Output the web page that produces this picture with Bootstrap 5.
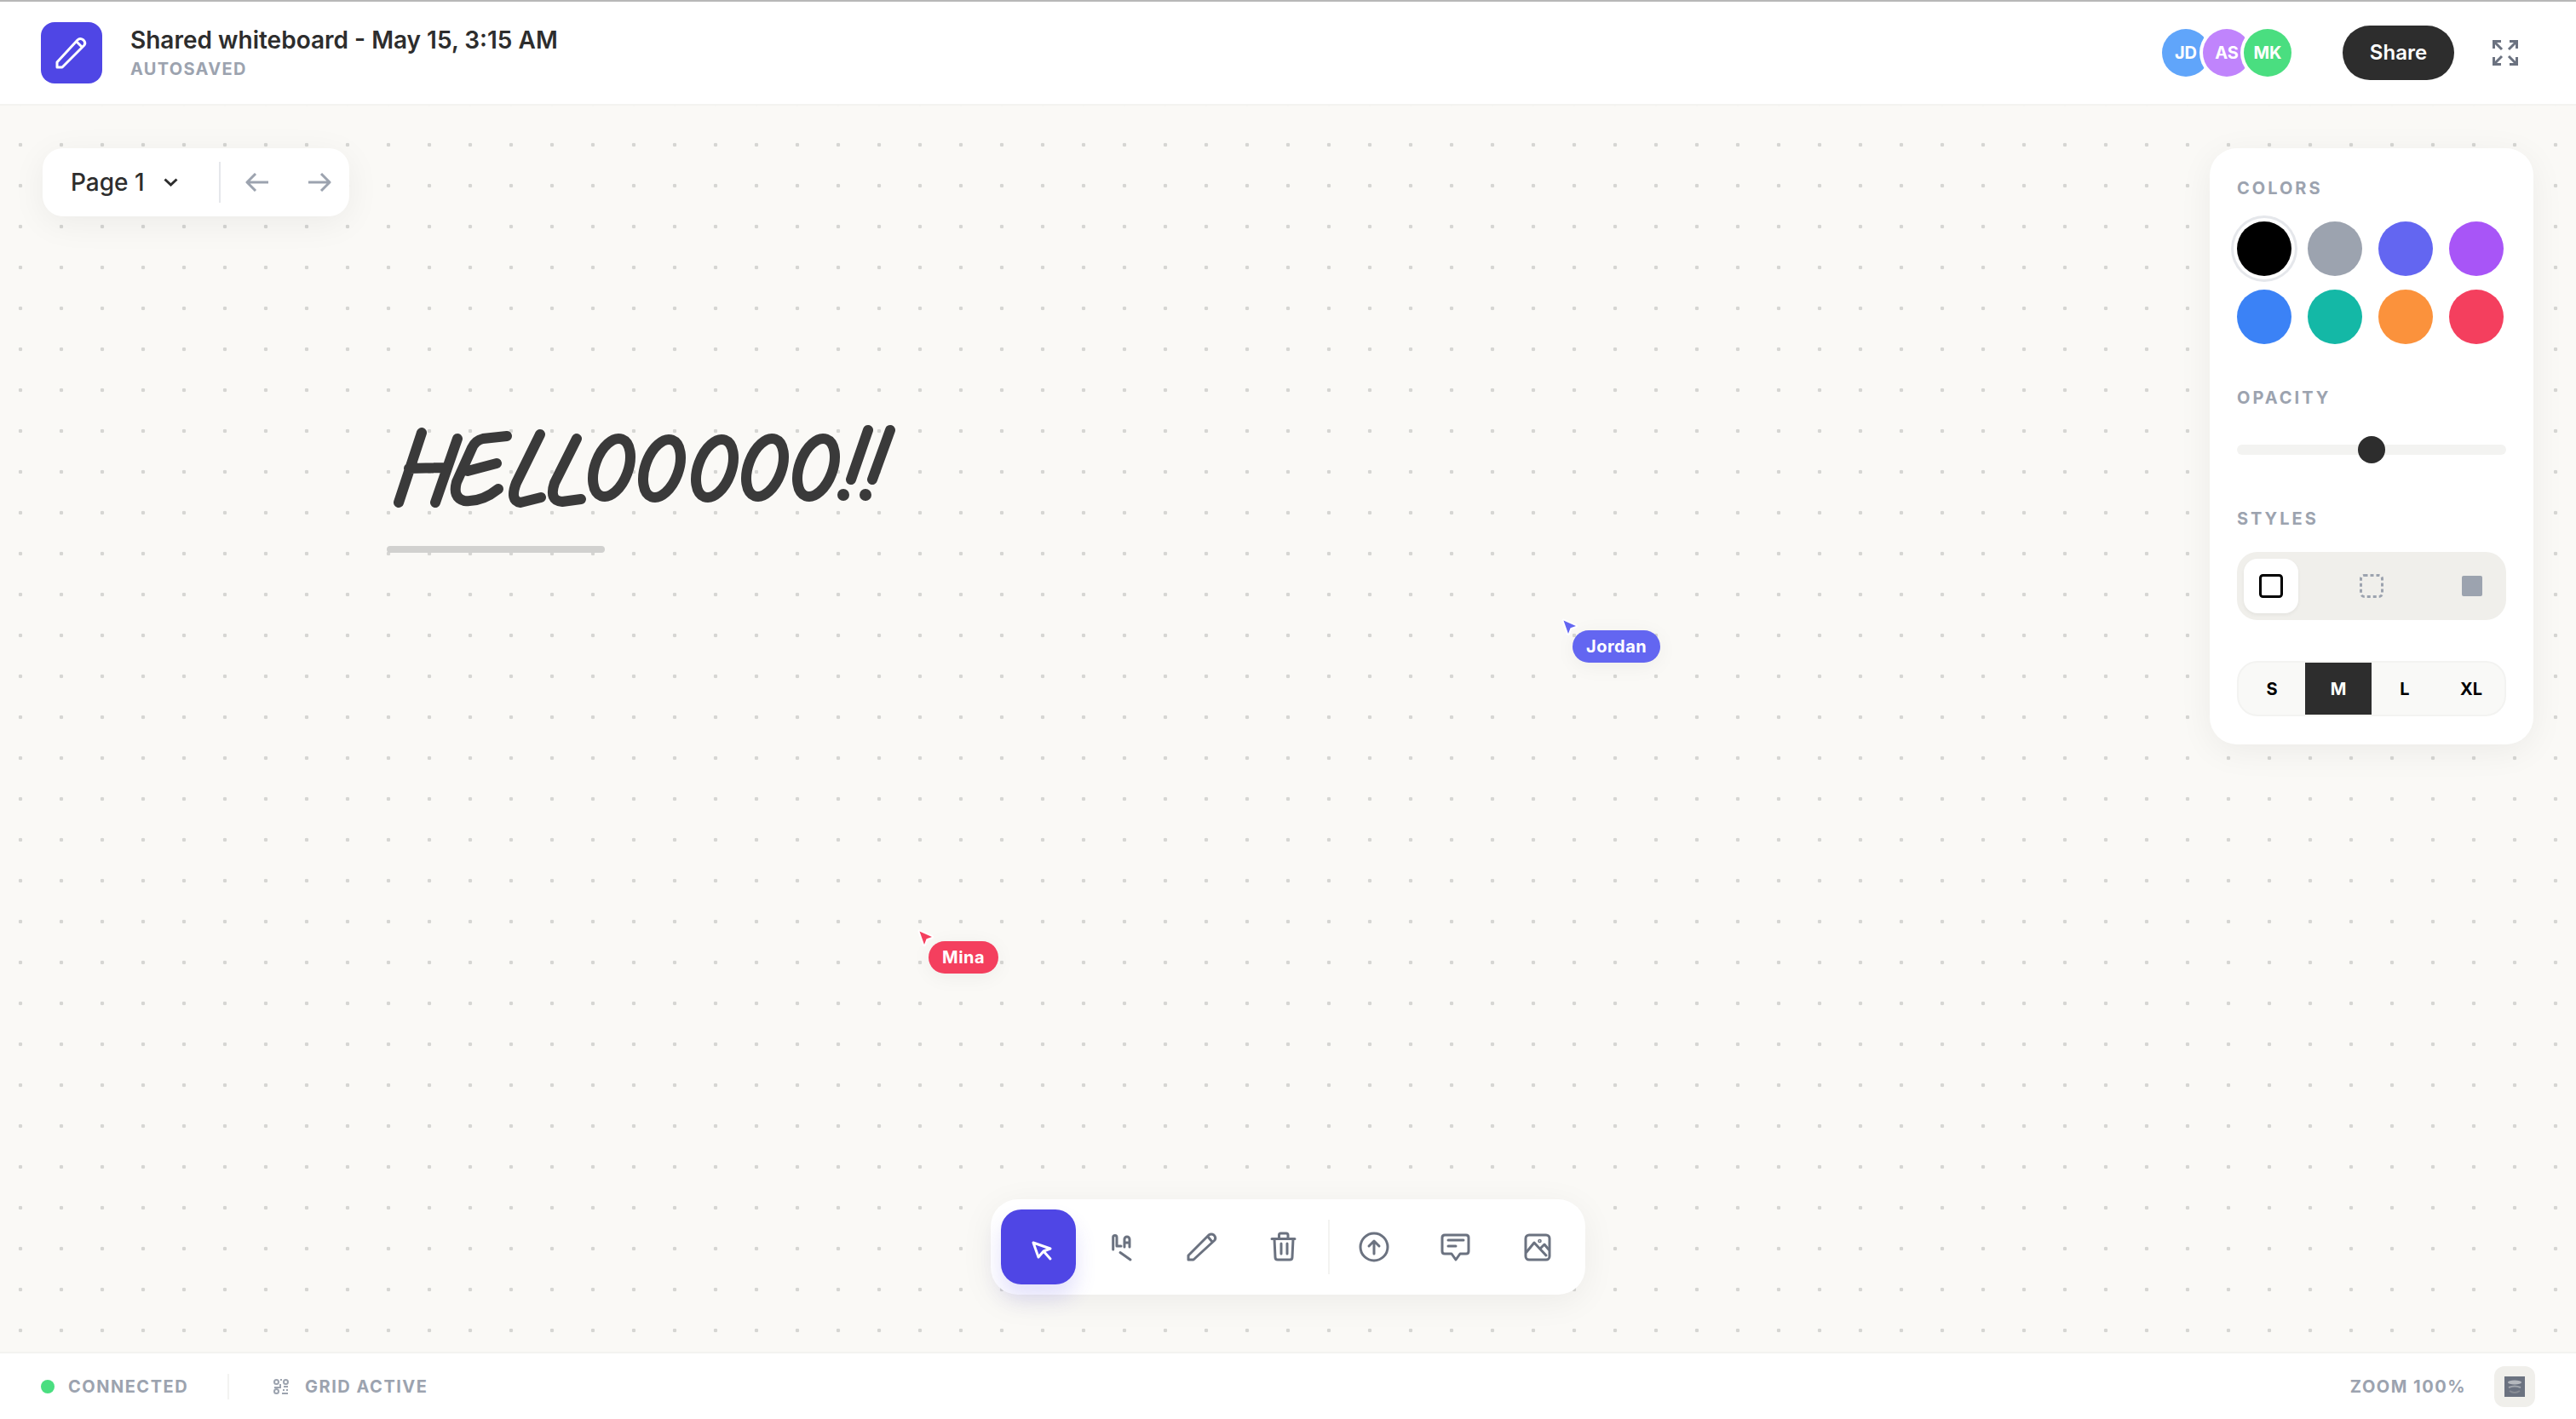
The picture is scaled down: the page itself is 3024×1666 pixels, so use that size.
<!DOCTYPE html>
<html lang="en">
<head>
  <meta charset="UTF-8">
  <title>Shared whiteboard</title>
  <meta name="viewport" content="width=device-width, initial-scale=1">
  <link href="https://cdn.jsdelivr.net/npm/bootstrap@5.3.0/dist/css/bootstrap.min.css" rel="stylesheet">
  <style>
    html, body { height: 100%; }
    body {
      font-family: Inter, "Liberation Sans", sans-serif;
      background: #fff;
      color: #2d2d2d;
      overflow: hidden;
    }
    .app-shell { height: 1666px; border-top: 2px solid #b8b8b8; }
    .top-bar { height: 122px; padding: 0 68px 0 48px; background: #fff; border-bottom: 2px solid #f3f3f0; }
    .logo-box { width: 72px; height: 72px; border-radius: 16px; background: #4f46e5; margin-right: 33px; }
    .title-block { margin-bottom: 2px; }
    .board-title { font-size: 28px; font-weight: 600; line-height: 36px; color: #2d2d2d; }
    .board-sub { font-size: 20px; font-weight: 700; line-height: 24px; letter-spacing: 1.3px; color: #9ca3af; margin-top: 4px; }
    .avatar {
      width: 56px; height: 56px; border-radius: 50%;
      box-shadow: 0 0 0 4px #fff;
      font-size: 20px; font-weight: 700; color: #fff;
      margin-left: -8px;
    }
    .avatar:first-child { margin-left: 0; }
    .share-btn {
      width: 131px; height: 64px; border-radius: 32px; border: 0;
      background: #2d2d2d; color: #fff; font-size: 24px; font-weight: 600;
      margin-left: 60px; margin-right: 45px;
    }
    .share-btn:hover { background: #2d2d2d; color: #fff; }

    .canvas-area {
      background-color: #faf9f6;
      background-image: radial-gradient(circle, #d6d6d3 2px, transparent 2.6px);
      background-size: 48px 48px;
      background-position: 0 22px;
    }
    .drawing { position: absolute; left: 0; top: 0; }
    .float-panel { position: absolute; background: #fff; box-shadow: 0 8px 40px rgba(0,0,0,.06); }

    .page-panel { left: 50px; top: 50px; width: 360px; height: 80px; border-radius: 24px; padding-left: 33px; }
    .page-name { font-size: 28px; font-weight: 500; width: 85px; white-space: nowrap; }
    .page-chevron { margin-left: 24px; }
    .page-sep { width: 2px; height: 48px; background: #e5e7eb; margin: 0 29px 0 48px; }
    .page-next { margin-left: 45px; }

    .tools-panel { right: 50px; top: 50px; width: 380px; height: 700px; border-radius: 32px; padding: 33px 32px 32px; }
    .panel-label { font-size: 20px; font-weight: 700; line-height: 28px; letter-spacing: 3px; color: #9ca3af; }
    .swatch-grid { display: grid; grid-template-columns: repeat(4, 64px); gap: 16px 19px; margin-top: 25px; }
    .swatch { width: 64px; height: 64px; border-radius: 50%; }
    .swatch-on { box-shadow: 0 0 0 4px #fff, 0 0 0 7px #e5e7eb; }
    .opacity-label { margin-top: 49px; }
    .slider-row { height: 32px; margin-top: 31px; margin-bottom: 51px; }
    .slider-track { height: 12px; width: 100%; border-radius: 6px; background: #f3f3f1; }
    .slider-thumb { position: absolute; left: 142px; top: 0; width: 32px; height: 32px; border-radius: 50%; background: #2d2d2d; }
    .style-seg { height: 80px; padding: 8px; border-radius: 24px; background: #f0efeb; margin-top: 25px; }
    .style-opt { width: 64px; height: 64px; border-radius: 16px; }
    .style-opt-on { background: #fff; box-shadow: 0 2px 4px rgba(0,0,0,.05); }
    .size-seg { height: 65px; margin-top: 48px; border: 2px solid #f3f3f1; border-radius: 24px; background: #f9f9f7; overflow: hidden; }
    .size-opt { width: 78px; font-size: 20px; font-weight: 700; color: #000; }
    .size-opt-on { background: #2d2d2d; color: #fff; }

    .tool-dock { bottom: 67px; height: 112px; border-radius: 32px; padding: 12px; gap: 8px; }
    .tool-btn { width: 88px; height: 88px; border-radius: 24px; }
    .tool-btn-on { background: #4f46e5; box-shadow: 0 16px 24px rgba(79,70,229,.16); }
    .dock-sep { width: 2px; height: 64px; background: #f3f3f1; }

    .peer { position: absolute; width: 130px; }
    .peer svg { position: absolute; left: 0; top: 0; }
    .peer svg path { paint-order: stroke; }
    .peer-tag {
      display: inline-block; height: 38px; line-height: 38px; margin: 15px 0 0 14px; padding: 0 16px;
      border-radius: 19px; font-size: 20px; font-weight: 700; letter-spacing: .5px; color: #fff;
      box-shadow: 0 4px 24px rgba(0,0,0,.05);
    }

    .foot-bar { height: 79px; padding: 0 48px; background: #fff; border-top: 2px solid #f3f3f0; }
    .foot-text { font-size: 20px; font-weight: 700; letter-spacing: 1.5px; color: #9ca3af; }
    .live-dot { width: 16px; height: 16px; border-radius: 50%; background: #4ade80; margin-right: 16px; }
    .foot-sep { width: 2px; height: 30px; background: #f3f3f1; margin: 0 52px 0 46px; }
    .grid-mark { margin-right: 19px; }
    .help-btn { width: 48px; height: 48px; border-radius: 12px; background: #f0efeb; margin-left: 33px; }
  </style>
</head>
<body>
  <div class="app-shell d-flex flex-column">

    <header class="top-bar d-flex align-items-center justify-content-between">
      <div class="d-flex align-items-center">
        <div class="logo-box d-flex align-items-center justify-content-center">
          <svg width="40" height="40" viewBox="0 0 40 40" fill="none" stroke="#fff" stroke-width="3" stroke-linejoin="round" stroke-linecap="round"><path d="M3 37V31L27 5Q30 2 34 5Q37 8 35 11L9 37Z"/><path d="M27 8L32 13"/></svg>
        </div>
        <div class="title-block">
          <div class="board-title">Shared whiteboard - May 15, 3:15 AM</div>
          <div class="board-sub">AUTOSAVED</div>
        </div>
      </div>
      <div class="d-flex align-items-center">
        <div class="d-flex">
          <div class="avatar d-flex align-items-center justify-content-center" style="background:#60a5fa">JD</div>
          <div class="avatar d-flex align-items-center justify-content-center" style="background:#c084fc">AS</div>
          <div class="avatar d-flex align-items-center justify-content-center" style="background:#4ade80">MK</div>
        </div>
        <button class="btn share-btn p-0">Share</button>
        <svg width="30" height="30" viewBox="0 0 30 30" fill="none" stroke="#6b7280" stroke-width="3"><path d="M1.5 10V1.5H10M2 2L11 11M20 1.5H28.500V10M28 2L19 11M1.5 20V28.500H10M2 28L11 19M20 28.500H28.500V20M28 28L19 19"/></svg>
      </div>
    </header>

    <main class="canvas-area flex-grow-1 position-relative">
      <svg class="drawing" width="1100" height="560" viewBox="0 124 1100 560" fill="none" stroke="#3a3a3a" stroke-width="12" stroke-linecap="round" stroke-linejoin="round">
        <path d="M495 508L468 590M537 515L511 590M480 550L522 549"/>
        <path d="M595 512L567 515Q558 517 554 526L536 566Q531 584 545 588Q565 590 585 574M549 553L583 544"/>
        <path d="M634 510L606 567Q598 588 611 590L635 584"/>
        <path d="M677 515L651 567Q644 588 660 589L682 586"/>
        <ellipse cx="718" cy="549" rx="19.500" ry="35.500" transform="rotate(20 718 549)"/>
        <ellipse cx="777" cy="550" rx="19.500" ry="35.500" transform="rotate(20 777 550)"/>
        <ellipse cx="839" cy="550" rx="19.500" ry="35.500" transform="rotate(20 839 550)"/>
        <ellipse cx="898" cy="549" rx="19.500" ry="35.500" transform="rotate(20 898 549)"/>
        <ellipse cx="958" cy="549" rx="19.500" ry="35.500" transform="rotate(20 958 549)"/>
        <path d="M1019 505L999 563M1045 505L1024 563"/>
        <circle cx="990" cy="581" r="7" fill="#3a3a3a" stroke="none"/>
        <circle cx="1016" cy="581" r="7" fill="#3a3a3a" stroke="none"/>
        <rect x="454" y="641" width="256" height="8" rx="4" fill="#d1d1cf" stroke="none"/>
      </svg>

      <div class="float-panel page-panel d-flex align-items-center">
        <div class="page-name">Page 1</div>
        <svg class="page-chevron" width="17" height="10" viewBox="0 0 17 10" fill="none" stroke="#2d2d2d" stroke-width="3"><path d="M1.500 1.500L8.500 8L15.500 1.500"/></svg>
        <div class="page-sep"></div>
        <svg width="28" height="22" viewBox="0 0 28 22" fill="none" stroke="#9ca3af" stroke-width="3" stroke-linejoin="round"><path d="M27 11H2M12 1L2 11L12 21"/></svg>
        <svg class="page-next" width="28" height="22" viewBox="0 0 28 22" fill="none" stroke="#9ca3af" stroke-width="3" stroke-linejoin="round"><path d="M1 11H26M16 1L26 11L16 21"/></svg>
      </div>

      <aside class="float-panel tools-panel">
        <div class="panel-label">COLORS</div>
        <div class="swatch-grid" id="swatches"></div>
        <div class="panel-label opacity-label">OPACITY</div>
        <div class="slider-row position-relative d-flex align-items-center">
          <div class="slider-track"></div>
          <div class="slider-thumb"></div>
        </div>
        <div class="panel-label">STYLES</div>
        <div class="style-seg d-flex justify-content-between">
          <div class="style-opt style-opt-on d-flex align-items-center justify-content-center">
            <svg width="28" height="28" viewBox="0 0 28 28" fill="none" stroke="#000" stroke-width="3"><rect x="1.500" y="1.500" width="25" height="25" rx="3"/></svg>
          </div>
          <div class="style-opt d-flex align-items-center justify-content-center">
            <svg width="28" height="28" viewBox="0 0 28 28" fill="none" stroke="#9ca3af" stroke-width="3" stroke-dasharray="4 3"><rect x="1.500" y="1.500" width="25" height="25" rx="4"/></svg>
          </div>
          <div class="style-opt d-flex align-items-center justify-content-center">
            <svg width="24" height="24" viewBox="0 0 24 24"><rect width="24" height="24" rx="2" fill="#9ca3af"/></svg>
          </div>
        </div>
        <div class="size-seg d-flex">
          <div class="size-opt d-flex align-items-center justify-content-center">S</div>
          <div class="size-opt size-opt-on d-flex align-items-center justify-content-center">M</div>
          <div class="size-opt d-flex align-items-center justify-content-center">L</div>
          <div class="size-opt d-flex align-items-center justify-content-center">XL</div>
        </div>
      </aside>

      <div class="peer" style="left:1832px;top:601px">
        <svg width="24" height="24" viewBox="0 0 24 24"><path d="M3.500 3.500L18 10L11.600 12.300L9 19Z" fill="#6366f1" stroke="#fff" stroke-width="4" stroke-linejoin="round"/></svg>
        <span class="peer-tag" style="background:#6366f1">Jordan</span>
      </div>
      <div class="peer" style="left:1076px;top:966px">
        <svg width="24" height="24" viewBox="0 0 24 24"><path d="M3.500 3.500L18 10L11.600 12.300L9 19Z" fill="#f43f5e" stroke="#fff" stroke-width="4" stroke-linejoin="round"/></svg>
        <span class="peer-tag" style="background:#f43f5e">Mina</span>
      </div>

      <nav class="float-panel tool-dock start-50 translate-middle-x d-flex align-items-center">
        <div class="tool-btn tool-btn-on d-flex align-items-center justify-content-center">
          <svg width="40" height="40" viewBox="0 0 40 40" fill="none" stroke="#fff" stroke-width="3" stroke-linecap="round" stroke-linejoin="round"><path d="M14 15L34 22L26 25L20 32ZM26 25L34 34"/></svg>
        </div>
        <div class="tool-btn d-flex align-items-center justify-content-center">
          <svg width="40" height="40" viewBox="0 0 40 40" fill="none" stroke="#6b7280" stroke-width="3" stroke-linecap="round" stroke-linejoin="round"><path d="M11.700 23V8.500Q11.700 6.500 14 6.500Q16 6.500 16 9V19H21M25 20V11a3 3 0 0 1 6 0V20M25 15H31M20 26.500L32 35"/></svg>
        </div>
        <div class="tool-btn d-flex align-items-center justify-content-center">
          <svg width="40" height="40" viewBox="0 0 40 40" fill="none" stroke="#6b7280" stroke-width="3" stroke-linecap="round" stroke-linejoin="round"><path d="M4 35V30L28 6Q31 4 34 6Q37 9 35 12L10 35ZM27 8L32 14"/></svg>
        </div>
        <div class="tool-btn d-flex align-items-center justify-content-center">
          <svg width="40" height="40" viewBox="0 0 40 40" fill="none" stroke="#6b7280" stroke-width="3" stroke-linecap="round" stroke-linejoin="round"><path d="M6 10.500H33M14.500 10.500V6Q14.500 4 16.500 4H23Q25 4 25 6V10.500M9 10.500L10 32Q10 35 13 35H27Q30 35 30 32L31 10.500M17 16V28M24 16V28"/></svg>
        </div>
        <div class="dock-sep"></div>
        <div class="tool-btn d-flex align-items-center justify-content-center">
          <svg width="40" height="40" viewBox="0 0 40 40" fill="none" stroke="#6b7280" stroke-width="3" stroke-linecap="round" stroke-linejoin="round"><circle cx="20" cy="20" r="16"/><path d="M20 28V13M14 19L20 13L26 19"/></svg>
        </div>
        <div class="tool-btn d-flex align-items-center justify-content-center">
          <svg width="40" height="40" viewBox="0 0 40 40" fill="none" stroke="#6b7280" stroke-width="3" stroke-linecap="round" stroke-linejoin="round"><path d="M7 6H32Q35 6 35 9V25Q35 28 32 28H25L20 35L15 28H7Q4 28 4 25V9Q4 6 7 6ZM11 12H29M11 19H20"/></svg>
        </div>
        <div class="tool-btn d-flex align-items-center justify-content-center">
          <svg width="40" height="40" viewBox="0 0 40 40" fill="none" stroke="#6b7280" stroke-width="3" stroke-linecap="round" stroke-linejoin="round"><rect x="6" y="6" width="28" height="29" rx="4"/><path d="M7 26L16 15L30 30M24 21L28 17L33 23"/><circle cx="22.500" cy="13" r=".8"/></svg>
        </div>
      </nav>
    </main>

    <footer class="foot-bar d-flex align-items-center justify-content-between">
      <div class="d-flex align-items-center">
        <div class="live-dot"></div>
        <div class="foot-text">CONNECTED</div>
        <div class="foot-sep"></div>
        <svg class="grid-mark" width="18" height="18" viewBox="0 0 18 18" fill="none" stroke="#9ca3af" stroke-width="2"><circle cx="3.500" cy="3.500" r="2.500"/><circle cx="14.500" cy="3.500" r="2.500"/><circle cx="3.500" cy="14.500" r="2.500"/><path d="M8 1H10M8 6V10H1M12 9H17M11 13H13M15 13H17M10 17H17"/></svg>
        <div class="foot-text">GRID ACTIVE</div>
      </div>
      <div class="d-flex align-items-center">
        <div class="foot-text">ZOOM 100%</div>
        <div class="help-btn d-flex align-items-center justify-content-center">
          <svg width="24" height="24" viewBox="0 0 24 24"><rect width="24" height="24" fill="#6b7280"/><ellipse cx="12" cy="7" rx="8" ry="2.500" fill="#b5b8be"/><path d="M5 13Q12 10 19 13" fill="none" stroke="#a2a6ad" stroke-width="2"/><path d="M6 17Q12 21 18 17" fill="none" stroke="#898d95" stroke-width="2"/></svg>
        </div>
      </div>
    </footer>
  </div>

  <script src="https://cdn.jsdelivr.net/npm/bootstrap@5.3.0/dist/js/bootstrap.bundle.min.js"></script>
  <script>
    // colour swatches of the side panel
    const warna = ['#000000', '#9ca3af', '#6366f1', '#a855f7', '#3b82f6', '#14b8a6', '#fb923c', '#f43f5e'];
    document.getElementById('swatches').innerHTML = warna.map((w, i) =>
      `<div class="swatch${i === 0 ? ' swatch-on' : ''}" style="background:${w}"></div>`
    ).join('');
  </script>
</body>
</html>
